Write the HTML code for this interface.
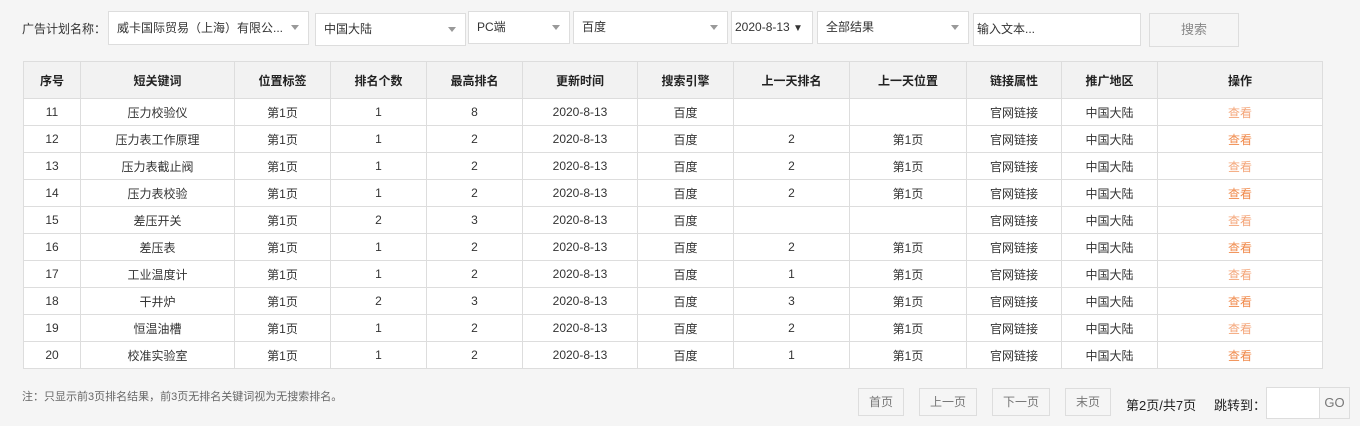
<!DOCTYPE html>
<html><head><meta charset="utf-8"><style>
body{margin:0;width:1360px;height:426px;background:#f5f5f5;font-family:"Liberation Sans","Noto Sans CJK SC",sans-serif;font-size:12px;color:#333;position:relative;overflow:hidden}
.a{position:absolute;box-sizing:border-box}
.sel{background:#fff;border:1px solid #ddd;height:33px;line-height:31px;padding-left:8px;color:#333}
.sel .ar{position:absolute;right:9px;top:13px;width:0;height:0;border-left:4px solid transparent;border-right:4px solid transparent;border-top:5px solid #999}
table{position:absolute;left:23px;top:61px;border-collapse:collapse;background:#fff;table-layout:fixed}
td,th{border:1px solid #ddd;text-align:center;height:26px;padding:0;font-size:12px;color:#333}
th{background:#f2f2f2;height:36px;font-weight:bold;color:#222}
.o{color:#f08a4b}.l{color:#f4a67a}
.btn{border:1px solid #ddd;background:#f5f5f5;height:28px;line-height:26px;text-align:center;color:#777}
</style></head><body>
<div class="a" style="left:22px;top:21px;line-height:16px">广告计划名称：</div>
<div class="a sel" style="left:108px;top:11px;width:201px;height:34px;line-height:32px">威卡国际贸易（上海）有限公...<span class="ar"></span></div>
<div class="a sel" style="left:315px;top:13px;width:151px">中国大陆<span class="ar"></span></div>
<div class="a sel" style="left:468px;top:11px;width:102px">PC端<span class="ar"></span></div>
<div class="a sel" style="left:573px;top:11px;width:155px">百度<span class="ar"></span></div>
<div class="a sel" style="left:731px;top:11px;width:82px;padding-left:3px">2020-8-13 <span style="font-size:10px">▼</span></div>
<div class="a sel" style="left:817px;top:11px;width:152px">全部结果<span class="ar"></span></div>
<div class="a sel" style="left:973px;top:13px;width:168px;padding-left:3px">输入文本...</div>
<div class="a btn" style="left:1149px;top:13px;width:90px;height:34px;line-height:32px;font-size:13px;color:#888">搜索</div>
<table>
<colgroup><col style="width:57px"><col style="width:154px"><col style="width:96px"><col style="width:96px"><col style="width:96px"><col style="width:115px"><col style="width:96px"><col style="width:116px"><col style="width:117px"><col style="width:95px"><col style="width:96px"><col style="width:165px"></colgroup>
<tr><th>序号</th><th>短关键词</th><th>位置标签</th><th>排名个数</th><th>最高排名</th><th>更新时间</th><th>搜索引擎</th><th>上一天排名</th><th>上一天位置</th><th>链接属性</th><th>推广地区</th><th>操作</th></tr>
<tr><td>11</td><td>压力校验仪</td><td>第1页</td><td>1</td><td>8</td><td>2020-8-13</td><td>百度</td><td></td><td></td><td>官网链接</td><td>中国大陆</td><td class="l">查看</td></tr>
<tr><td>12</td><td>压力表工作原理</td><td>第1页</td><td>1</td><td>2</td><td>2020-8-13</td><td>百度</td><td>2</td><td>第1页</td><td>官网链接</td><td>中国大陆</td><td class="o">查看</td></tr>
<tr><td>13</td><td>压力表截止阀</td><td>第1页</td><td>1</td><td>2</td><td>2020-8-13</td><td>百度</td><td>2</td><td>第1页</td><td>官网链接</td><td>中国大陆</td><td class="l">查看</td></tr>
<tr><td>14</td><td>压力表校验</td><td>第1页</td><td>1</td><td>2</td><td>2020-8-13</td><td>百度</td><td>2</td><td>第1页</td><td>官网链接</td><td>中国大陆</td><td class="o">查看</td></tr>
<tr><td>15</td><td>差压开关</td><td>第1页</td><td>2</td><td>3</td><td>2020-8-13</td><td>百度</td><td></td><td></td><td>官网链接</td><td>中国大陆</td><td class="l">查看</td></tr>
<tr><td>16</td><td>差压表</td><td>第1页</td><td>1</td><td>2</td><td>2020-8-13</td><td>百度</td><td>2</td><td>第1页</td><td>官网链接</td><td>中国大陆</td><td class="o">查看</td></tr>
<tr><td>17</td><td>工业温度计</td><td>第1页</td><td>1</td><td>2</td><td>2020-8-13</td><td>百度</td><td>1</td><td>第1页</td><td>官网链接</td><td>中国大陆</td><td class="l">查看</td></tr>
<tr><td>18</td><td>干井炉</td><td>第1页</td><td>2</td><td>3</td><td>2020-8-13</td><td>百度</td><td>3</td><td>第1页</td><td>官网链接</td><td>中国大陆</td><td class="o">查看</td></tr>
<tr><td>19</td><td>恒温油槽</td><td>第1页</td><td>1</td><td>2</td><td>2020-8-13</td><td>百度</td><td>2</td><td>第1页</td><td>官网链接</td><td>中国大陆</td><td class="l">查看</td></tr>
<tr><td>20</td><td>校准实验室</td><td>第1页</td><td>1</td><td>2</td><td>2020-8-13</td><td>百度</td><td>1</td><td>第1页</td><td>官网链接</td><td>中国大陆</td><td class="o">查看</td></tr>
</table>
<div class="a" style="left:22px;top:388px;color:#666;font-size:11px">注：只显示前3页排名结果，前3页无排名关键词视为无搜索排名。</div>
<div class="a btn" style="left:858px;top:388px;width:46px">首页</div>
<div class="a btn" style="left:919px;top:388px;width:58px">上一页</div>
<div class="a btn" style="left:992px;top:388px;width:58px">下一页</div>
<div class="a btn" style="left:1065px;top:388px;width:46px">末页</div>
<div class="a" style="left:1126px;top:395px;font-size:13px;color:#222">第2页/共7页</div>
<div class="a" style="left:1214px;top:395px;font-size:13px;color:#222">跳转到：</div>
<div class="a" style="left:1266px;top:387px;width:54px;height:32px;background:#fff;border:1px solid #ddd"></div>
<div class="a btn" style="left:1319px;top:387px;width:31px;height:32px;line-height:30px;font-size:13px">GO</div>
</body></html>
